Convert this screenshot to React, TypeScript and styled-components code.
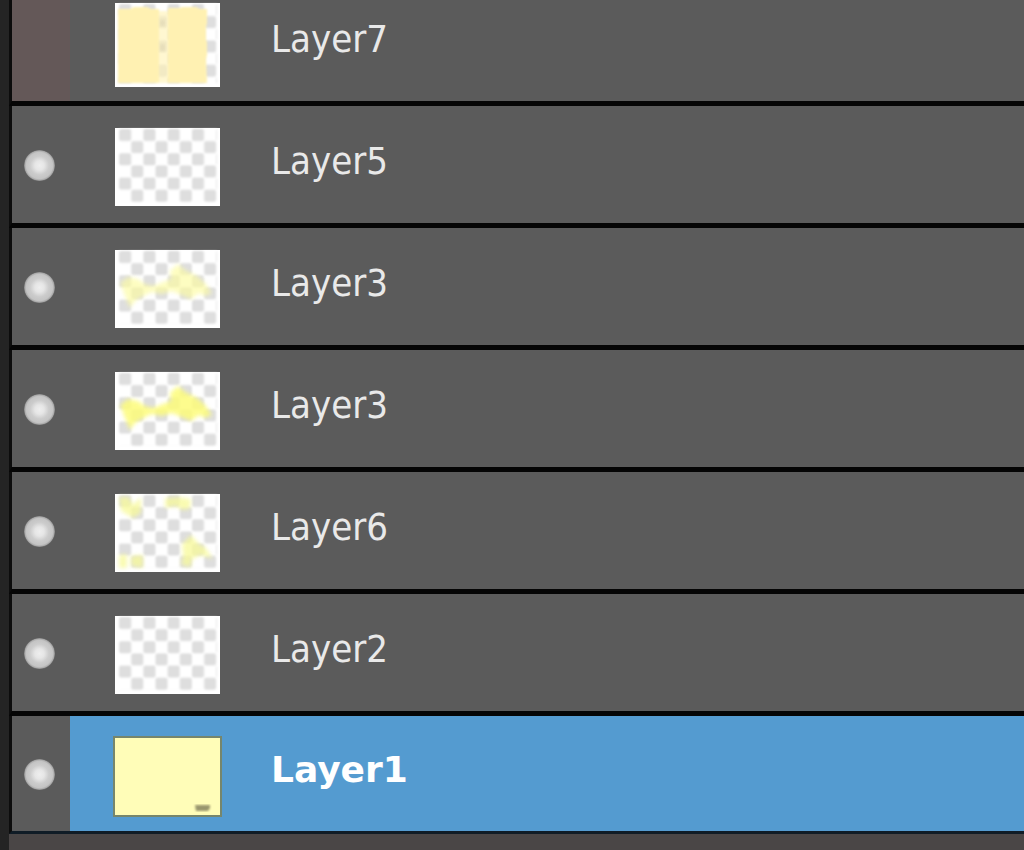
import React, { useState } from 'react';
import styled, { createGlobalStyle } from 'styled-components';

const GlobalStyle = createGlobalStyle`
  *, *::before, *::after { box-sizing: border-box; }
  body {
    margin: 0;
    background: #4a4646;
    overflow: hidden;
    font-family: 'DejaVu Sans Condensed', 'DejaVu Sans', Tahoma, sans-serif;
  }
`;

const Panel = styled.main`
  display: flex;
  min-height: 100vh;
  background: #4a4646;
`;

const Gutter = styled.div`
  flex: none;
  width: 9px;
  background: #242424;
`;

const LayerList = styled.ul`
  flex: 1;
  align-self: flex-start;
  min-width: 0;
  margin: -16px 0 0;
  padding: 0;
  list-style: none;
`;

const LayerRow = styled.li`
  display: flex;
  height: 122px;
  border-left: 3px solid #0c0c0c;
  border-bottom: 5px solid #050505;
  background: #5b5b5b;

  &:last-child {
    height: 118px;
    border-bottom: 3px solid #101c26;
  }
`;

const VisibilityButton = styled.button<{ $on: boolean }>`
  flex: none;
  display: flex;
  align-items: center;
  justify-content: center;
  width: 58px;
  padding: 2px 3px 0 0;
  border: 0;
  background: ${({ $on }) => ($on ? '#5b5b5b' : '#645858')};
`;

const LayerButton = styled.button<{ $selected: boolean }>`
  flex: 1;
  display: flex;
  align-items: center;
  gap: 51px;
  min-width: 0;
  padding: 5px 0 0 45px;
  border: 0;
  text-align: left;
  font-family: inherit;
  color: ${({ $selected }) => ($selected ? '#ffffff' : '#e9e9e9')};
  background: ${({ $selected }) => ($selected ? '#549bd0' : '#5b5b5b')};
`;

const LayerName = styled.span<{ $selected: boolean }>`
  padding-bottom: 12px;
  font-family: ${({ $selected }) =>
    $selected ? "'DejaVu Sans', Verdana, sans-serif" : 'inherit'};
  font-size: ${({ $selected }) => ($selected ? '36px' : '38px')};
  font-weight: ${({ $selected }) => ($selected ? 700 : 400)};
  line-height: 44px;
  white-space: nowrap;
`;

const ThumbSvg = styled.svg`
  flex: none;
  display: block;
  overflow: visible;
`;

type Art = 'blank' | 'blocks' | 'faintClouds' | 'clouds' | 'corners' | 'paper';

interface Layer {
  id: string;
  name: string;
  art: Art;
  visible: boolean;
}

const LAYERS: Layer[] = [
  { id: 'l7', name: 'Layer7', art: 'blocks', visible: false },
  { id: 'l5', name: 'Layer5', art: 'blank', visible: true },
  { id: 'l3a', name: 'Layer3', art: 'faintClouds', visible: true },
  { id: 'l3b', name: 'Layer3', art: 'clouds', visible: true },
  { id: 'l6', name: 'Layer6', art: 'corners', visible: true },
  { id: 'l2', name: 'Layer2', art: 'blank', visible: true },
  { id: 'l1', name: 'Layer1', art: 'paper', visible: true },
];

const CLOUDS =
  'M5 33 L13 27 L23 29 L30 34 L38 36 L48 32 L56 29 L55 21 L63 14 L70 20 L82 26 L90 33 L97 43 L90 46 L84 43 L76 49 L66 45 L57 41 L47 44 L36 42 L27 47 L20 51 L15 58 L10 46 Z';

function Artwork({ art }: { art: Art }) {
  switch (art) {
    case 'blocks':
      return (
        <g fill="#fff1b2" filter="url(#soft)">
          <path d="M3 6h12l4-2h13l4 2h8v74H3z" />
          <path d="M53 5h11l4-1h13l4 2h7v14l-1 4v12l1 4v12l-1 4 1 24H53z" />
          <path d="M43 8h11v72H43z" opacity="0.6" />
          <path d="M45 17h5v6h-5zM45 41h5v7h-5z" fill="#dfd6b4" opacity="0.6" />
        </g>
      );
    case 'faintClouds':
      return <path d={CLOUDS} fill="#fdfca0" opacity="0.65" filter="url(#haze)" />;
    case 'clouds':
      return <path d={CLOUDS} fill="#fdfc7a" opacity="0.85" filter="url(#haze)" />;
    case 'corners':
      return (
        <g fill="#f8fa98" opacity="0.75" filter="url(#haze)">
          <path d="M4 3l10 0 4 8 8-8v16l-8 5-12-7z" />
          <path d="M50 4l14-1 12 2-1 10-8 1-6-4-11 2z" />
          <path d="M67 50l9-9 8 9 6 3 8 12-12-4-9 4-1 8-10-2 2-9z" />
          <path d="M4 61l8-1v14H4zM16 62l12-1v13l-12-2z" />
        </g>
      );
    case 'paper':
      return (
        <g>
          <rect x="-1" y="0" width="107" height="79" fill="#fffdb8" stroke="#76866c" strokeWidth="2" />
          <path d="M80 68h15v3l-2 3H81z" fill="#99966d" filter="url(#soft)" />
        </g>
      );
    default:
      return null;
  }
}

function Thumbnail({ art }: { art: Art }) {
  const height = art === 'blocks' ? 84 : 78;
  const shift = art === 'blocks' ? 6 : 0;
  return (
    <ThumbSvg width={105} height={height} viewBox={`0 0 105 ${height}`} aria-hidden="true">
      {art !== 'paper' && (
        <>
          <rect width="105" height={height} fill="#ffffff" />
          <rect
            x="4"
            y="1"
            width="98"
            height={73 + shift}
            fill="url(#checker)"
            filter="url(#edge)"
          />
        </>
      )}
      <Artwork art={art} />
    </ThumbSvg>
  );
}

const Definitions = () => (
  <svg width="0" height="0" aria-hidden="true" display="block">
    <defs>
      <pattern id="checker" x="4" y="1" width="24.3" height="24.3" patternUnits="userSpaceOnUse">
        <rect width="24.3" height="24.3" fill="#ffffff" />
        <rect x="0.1" y="0" width="12" height="12" rx="2" fill="#dedede" />
        <rect x="12.2" y="12.1" width="12" height="12" rx="2" fill="#dedede" />
      </pattern>
      <radialGradient id="dot">
        <stop offset="0" stopColor="#eeeeee" />
        <stop offset="0.3" stopColor="#e6e6e6" />
        <stop offset="0.6" stopColor="#cccccc" />
        <stop offset="0.85" stopColor="#c4c4c4" />
        <stop offset="0.95" stopColor="#a8a8a8" />
        <stop offset="1" stopColor="#777777" />
      </radialGradient>
      <filter id="edge" colorInterpolationFilters="sRGB">
        <feGaussianBlur stdDeviation="0.8" />
      </filter>
      <filter id="soft" colorInterpolationFilters="sRGB">
        <feGaussianBlur stdDeviation="1" />
      </filter>
      <filter
        id="haze"
        x="-20%"
        y="-20%"
        width="140%"
        height="140%"
        colorInterpolationFilters="sRGB"
      >
        <feGaussianBlur stdDeviation="2" />
      </filter>
    </defs>
  </svg>
);

export default function App() {
  const [layers, setLayers] = useState(LAYERS);
  const [selectedId, setSelectedId] = useState('l1');

  const toggle = (id: string) =>
    setLayers((all) => all.map((l) => (l.id === id ? { ...l, visible: !l.visible } : l)));

  return (
    <Panel>
      <GlobalStyle />
      <Definitions />
      <Gutter />
      <LayerList>
        {layers.map((layer) => {
          const selected = layer.id === selectedId;
          return (
            <LayerRow key={layer.id}>
              <VisibilityButton
                type="button"
                $on={layer.visible}
                aria-pressed={layer.visible}
                aria-label={`Show ${layer.name}`}
                onClick={() => toggle(layer.id)}
              >
                {layer.visible && (
                  <svg width="31" height="31" viewBox="0 0 31 31" aria-hidden="true">
                    <circle cx="15.5" cy="15.5" r="15.5" fill="url(#dot)" />
                  </svg>
                )}
              </VisibilityButton>
              <LayerButton
                type="button"
                $selected={selected}
                aria-pressed={selected}
                onClick={() => setSelectedId(layer.id)}
              >
                <Thumbnail art={layer.art} />
                <LayerName $selected={selected}>{layer.name}</LayerName>
              </LayerButton>
            </LayerRow>
          );
        })}
      </LayerList>
    </Panel>
  );
}
